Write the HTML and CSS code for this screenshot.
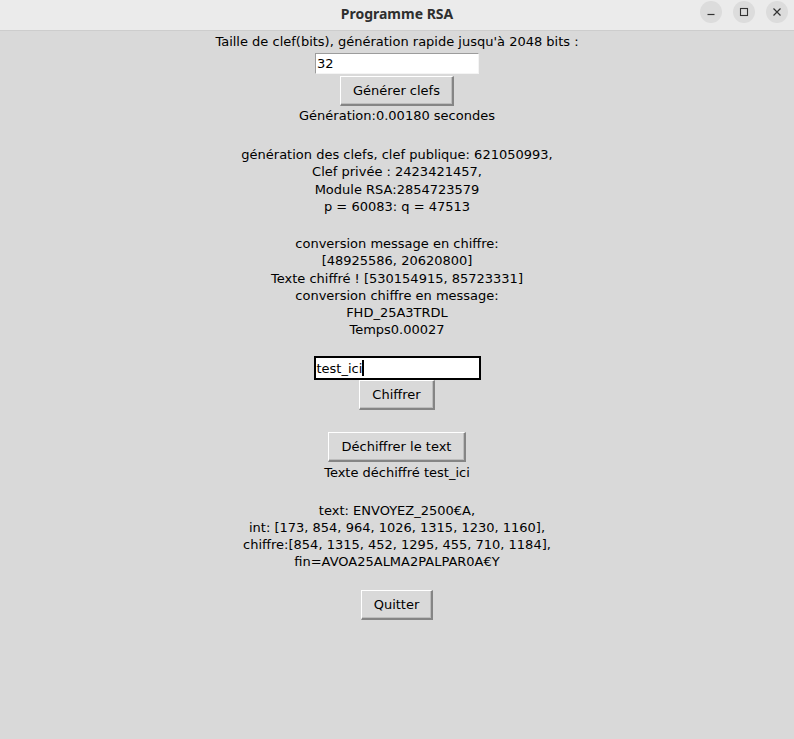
FILE: index.html
```html
<!DOCTYPE html>
<html lang="fr">
<head>
<meta charset="utf-8">
<title>Programme RSA</title>
<link rel="stylesheet" href="styles.css">
</head>
<body>
<div class="window">
  <header class="titlebar">
    <span class="title">Programme RSA</span>
    <div class="controls">
      <span class="ctl"><svg width="10" height="10" viewBox="0 0 10 10"><path d="M1.5 7.5h7" stroke="#333" stroke-width="1.2"/></svg></span>
      <span class="ctl"><svg width="10" height="10" viewBox="0 0 10 10"><rect x="1.5" y="1.5" width="7" height="7" fill="none" stroke="#333" stroke-width="1.1"/></svg></span>
      <span class="ctl"><svg width="10" height="10" viewBox="0 0 10 10"><path d="M1.5 1.5l7 7M8.5 1.5l-7 7" stroke="#333" stroke-width="1.2"/></svg></span>
    </div>
  </header>
  <main class="app">
    <p class="lbl l1">Taille de clef(bits), génération rapide jusqu'à 2048 bits :</p>
    <div class="entry e1">32</div>
    <button class="btn b-gen">Générer clefs</button>
    <p class="lbl l2">Génération:0.00180 secondes</p>
    <p class="lbl multi l3"><br>génération des clefs, clef publique: 621050993,<br>Clef privée : 2423421457,<br>Module RSA:2854723579<br>p = 60083: q = 47513</p>
    <p class="lbl multi l4"><br>conversion message en chiffre:<br>[48925586, 20620800]<br>Texte chiffré ! [530154915, 85723331]<br>conversion chiffre en message:<br>FHD_25A3TRDL<br>Temps0.00027</p>
    <div class="entry e2">test_ici<span class="caret"></span></div>
    <button class="btn b-chif">Chiffrer</button>
    <button class="btn b-dech">Déchiffrer le text</button>
    <p class="lbl l5">Texte déchiffré test_ici</p>
    <p class="lbl multi l6"><br>text: ENVOYEZ_2500€A,<br>int: [173, 854, 964, 1026, 1315, 1230, 1160],<br>chiffre:[854, 1315, 452, 1295, 455, 710, 1184],<br>fin=AVOA25ALMA2PALPAR0A€Y</p>
    <button class="btn b-quit">Quitter</button>
  </main>
</div>
</body>
</html>
```
FILE: styles.css
```css
* { box-sizing: border-box; }
html, body { margin: 0; padding: 0; }
body {
  width: 794px;
  height: 739px;
  background: #d9d9d9;
  font-family: "DejaVu Sans", "Noto Sans", sans-serif;
  color: #000;
  overflow: hidden;
}
.window { display: flex; flex-direction: column; height: 739px; }
.titlebar {
  height: 31px;
  background: #ebebeb;
  border-bottom: 1px solid #cdcdcd;
  display: flex;
  align-items: center;
  justify-content: center;
  position: relative;
}
.title {
  font-family: "Noto Sans", "DejaVu Sans", sans-serif;
  font-weight: bold;
  font-size: 14px;
  color: #2e2e2e;
  margin-top: -3px;
}
.controls {
  position: absolute;
  right: 6px;
  top: 1px;
  display: flex;
  gap: 11px;
}
.ctl {
  width: 22px;
  height: 22px;
  border-radius: 50%;
  background: #dcdcdc;
  display: flex;
  align-items: center;
  justify-content: center;
}
.app {
  flex: 1;
  display: flex;
  flex-direction: column;
  align-items: center;
  padding-top: 2px;
  font-size: 13px;
}
.lbl {
  margin: 0;
  text-align: center;
  line-height: 17px;
  white-space: nowrap;
}
.multi { line-height: 17.2px; }
.l2 { margin-top: 1px; }
.l3 { margin-top: 5px; }
.l4 { margin-top: 3px; }
.l5 { margin-top: 2px; }
.l6 { margin-top: 3px; }
.entry {
  background: #fff;
  text-align: left;
  line-height: 17px;
  white-space: nowrap;
  display: flex;
  align-items: center;
}
.e1 {
  margin-top: 3px;
  width: 164px;
  height: 21px;
  border-top: 1px solid #9c9c9c;
  border-left: 1px solid #9c9c9c;
  border-right: 1px solid #f4f4f4;
  border-bottom: 1px solid #f4f4f4;
  padding-left: 1px;
}
.e2 {
  margin-top: 18px;
  width: 167px;
  height: 24px;
  border: 2px solid #000;
  padding-left: 1px;
}
.caret {
  display: inline-block;
  width: 2px;
  height: 16px;
  background: #000;
  margin-left: 0;
}
.btn {
  font: inherit;
  font-size: 13px;
  color: #000;
  background: #d9d9d9;
  height: 30px;
  padding: 0;
  border-top: 1px solid #ffffff;
  border-left: 1px solid #ffffff;
  border-right: 2px solid #858585;
  border-bottom: 2px solid #858585;
  box-shadow: inset -1px -1px 0 #bdbdbd;
  display: flex;
  align-items: center;
  justify-content: center;
  line-height: 17px;
  white-space: nowrap;
}
.b-gen { margin-top: 2px; width: 114px; }
.b-chif { margin-top: 0; width: 76px; }
.b-dech { margin-top: 22px; width: 138px; }
.b-quit { margin-top: 20px; width: 72px; }
```
